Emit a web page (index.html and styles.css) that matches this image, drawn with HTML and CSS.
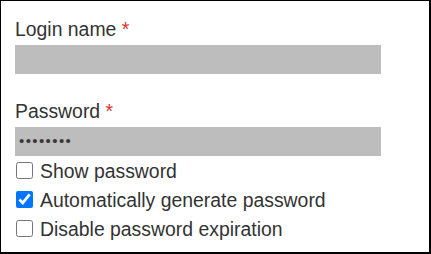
FILE: index.html
```html
<!DOCTYPE html>
<html>
<head>
<meta charset="utf-8">
<link rel="stylesheet" href="styles.css">
</head>
<body>
<div class="panel">
  <div class="field">
    <div class="label">Login name <span class="req">*</span></div>
    <div class="input"></div>
  </div>
  <div class="field">
    <div class="label">Password <span class="req">*</span></div>
    <div class="input"><span class="dots">••••••••</span></div>
  </div>
  <label class="check"><input type="checkbox"><span>Show password</span></label>
  <label class="check"><input type="checkbox" checked><span>Automatically generate password</span></label>
  <label class="check"><input type="checkbox"><span>Disable password expiration</span></label>
</div>
</body>
</html>
```
FILE: styles.css
```css
html, body {
  margin: 0;
  padding: 0;
  background: #fff;
}
.panel {
  box-sizing: border-box;
  width: 431px;
  height: 254px;
  border-style: solid;
  border-color: #000;
  border-width: 1px 2px 2px 1px;
  padding: 17px 48px 0 14px;
  font-family: "Liberation Sans", Arial, sans-serif;
  font-size: 19.4px;
  color: #333;
}
.field + .field {
  margin-top: 26px;
}
.label {
  line-height: 22px;
  margin-bottom: 5px;
}
.req {
  color: #e0302c;
}
.input {
  height: 29px;
  background: #bdbdbd;
  display: flex;
  align-items: center;
  padding-left: 4px;
}
.dots {
  font-size: 15px;
  letter-spacing: 1.4px;
  color: #3a3a3a;
  line-height: 1;
  margin-top: -2px;
}
.check {
  display: flex;
  align-items: center;
  height: 29px;
  line-height: 22px;
}
.check input {
  width: 17px;
  height: 17px;
  margin: 0 7px 0 1px;
}
```
